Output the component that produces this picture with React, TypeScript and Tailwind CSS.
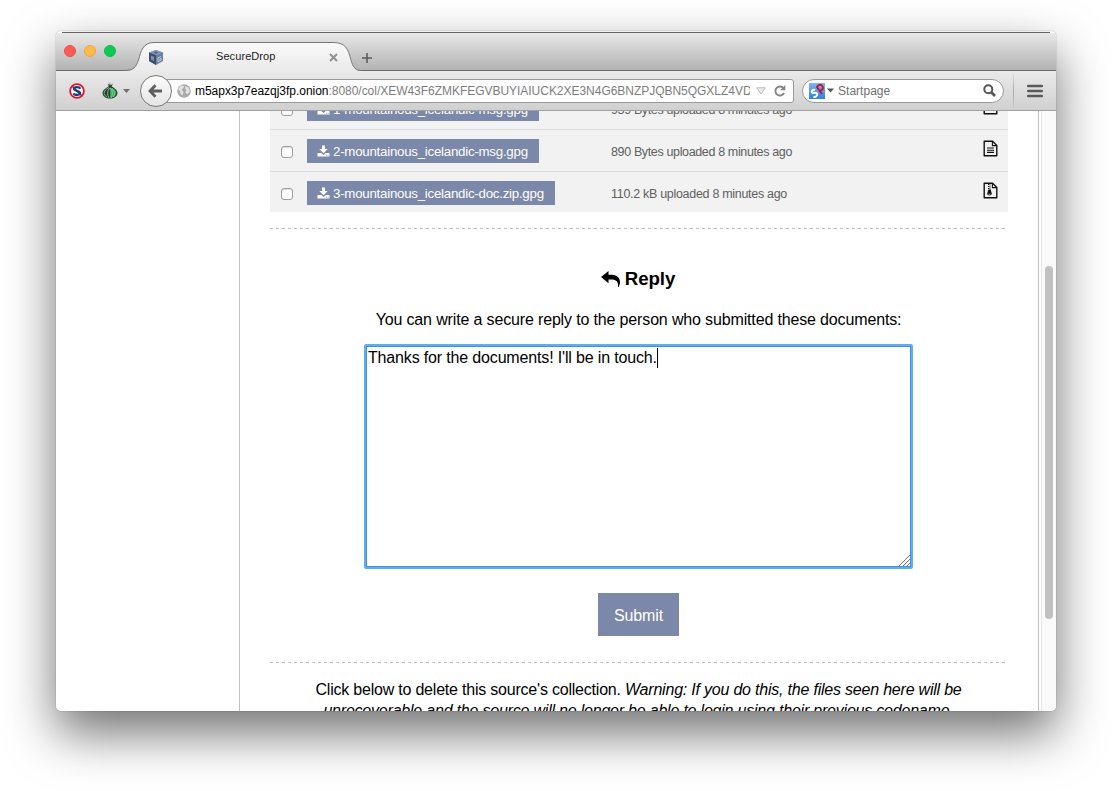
import React from "react";

const chromeFont = "font-['Liberation_Sans',Arial,sans-serif]";

function TextFileIcon() {
  return (
    <svg width="15" height="17" viewBox="0 0 15 17" fill="none" stroke="#111" className="block">
      <path d="M1.2 1.2H9.6L13.8 5.4V15.8H1.2Z" strokeWidth="1.4" strokeLinejoin="round" />
      <path d="M9.4 1.4V5.6H13.6" strokeWidth="1.1" />
      <path d="M4 8H11M4 10.2H11M4 12.4H11" strokeWidth="1.1" />
    </svg>
  );
}

function ZipFileIcon() {
  return (
    <svg width="15" height="17" viewBox="0 0 15 17" fill="none" stroke="#111" className="block">
      <path d="M1.2 1.2H9.6L13.8 5.4V15.8H1.2Z" strokeWidth="1.4" strokeLinejoin="round" />
      <path d="M9.4 1.4V5.6H13.6" strokeWidth="1.1" />
      <path d="M5.6 2V8M7 2.6V8" strokeWidth="1.1" strokeDasharray="1 1" />
      <path d="M5.4 7.6H7.6L8.8 11.6Q8.8 13.6 6.5 13.6T4.2 11.6Z" fill="#111" stroke="none" />
      <path d="M5.6 12.2H7.4" stroke="#eee" strokeWidth="0.8" />
    </svg>
  );
}

function DownloadIcon() {
  return (
    <svg width="13" height="12" viewBox="0 0 13 12" fill="#fff" className="block">
      <path d="M5 0.500H8V4H10.700L6.500 8.200L2.300 4H5Z" />
      <path d="M0.500 8H4.200L6.500 10L8.800 8H12.500V11.500H0.500Z" />
      <path d="M9 10.300H9.900M10.700 10.300H11.600" stroke="#7b88a9" strokeWidth="0.8" />
    </svg>
  );
}

type Doc = { name: string; info: string; zip?: boolean; button: string; meta: string };

const docs: Doc[] = [
  { name: "1-mountainous_icelandic-msg.gpg", info: "939 Bytes uploaded 8 minutes ago", button: "w-[232px]", meta: "tracking-[-0.36px]" },
  { name: "2-mountainous_icelandic-msg.gpg", info: "890 Bytes uploaded 8 minutes ago", button: "w-[232px]", meta: "tracking-[-0.36px]" },
  { name: "3-mountainous_icelandic-doc.zip.gpg", info: "110.2 kB uploaded 8 minutes ago", zip: true, button: "w-[248px]", meta: "tracking-[-0.3px]" },
];

function DocRow({ doc, last }: { doc: Doc; last: boolean }) {
  return (
    <div className={last ? "flex h-[40px] bg-[#f2f2f2]" : "flex h-[42px] border-b border-[#dcdcdc] bg-[#f2f2f2]"}>
      <div className="w-[37px] pl-[11px] pt-[16px]">
        <span className="block h-[12px] w-[12px] rounded-[3px] border border-[#9d9d9d] bg-white shadow-[inset_0_1px_1px_#ddd]" />
      </div>
      <div className="w-[304px] pt-[9px]">
        <div className={`${doc.button} flex h-[24px] items-center bg-[#7b88a9] pl-[10px] text-[13.3px] text-white`}>
          <DownloadIcon />
          <span className="ml-[3px] whitespace-nowrap pt-px tracking-[-0.25px]">{doc.name}</span>
        </div>
      </div>
      <div className={`${doc.meta} flex-1 whitespace-nowrap pt-[13px] text-[12.5px] leading-[18px] text-[#606060]`}>{doc.info}</div>
      <div className="w-[25px] pt-[10px]">{doc.zip ? <ZipFileIcon /> : <TextFileIcon />}</div>
    </div>
  );
}

function Dashes() {
  return <div className="h-px bg-[repeating-linear-gradient(90deg,#bfbfbf_0,#bfbfbf_3px,transparent_3px,transparent_6px)]" />;
}

function TabBar() {
  return (
    <div className="flex h-[40px] flex-col">
      <div className="h-px bg-[#f0f0f0]" />
      <div className="mx-[6px] h-px bg-[#666]" />
      <div className="flex h-[38px] border-b border-[#6b6b6b] bg-linear-to-b from-[#e8e8e8] to-[#b3b3b3]">
        <div className="flex w-[68px] gap-[8px] pl-[8px] pt-[12px]">
          <span className="h-[12px] w-[12px] shrink-0 rounded-full border border-[#e8504c] bg-[#fc5b57]" />
          <span className="h-[12px] w-[12px] shrink-0 rounded-full border border-[#eca83c] bg-[#fdbb4b]" />
          <span className="h-[12px] w-[12px] shrink-0 rounded-full border border-[#0dbb4a] bg-[#0bca52]" />
        </div>
        <div className="relative flex h-[38px] w-[238px]">
          <svg width="238" height="38" viewBox="0 0 238 38" className="absolute left-0 top-0">
            <defs>
              <linearGradient id="tab" x1="0" y1="0" x2="0" y2="1">
                <stop offset="0" stopColor="#fafafa" />
                <stop offset="1" stopColor="#eaeaea" />
              </linearGradient>
            </defs>
            <path d="M0 38C10 38 12 34 14.500 27C17 18 19 9.500 30 9.500H209C222 9.500 224 16 227 27C229 34 231 38 238 38Z" fill="url(#tab)" />
            <path d="M0 37.500C10 37.500 12 34 14.500 27C17 18 19 9.500 30 9.500H209C222 9.500 224 16 227 27C229 34 231 37.500 238 37.500" fill="none" stroke="#777" />
          </svg>
          <div className="relative flex w-full pl-[25px] pt-[16px]">
            <svg width="14" height="15" viewBox="0 0 14 15" className="mt-px block">
              <path d="M7 0L14 2.500V11L7 15L0 11V2.500Z" fill="#6a7fa1" />
              <path d="M0 2.500L7 0L14 2.500L7 5.300Z" fill="#8299b9" />
              <path d="M0 2.500L7 5.300V15L0 11Z" fill="#3c4f6c" />
              <path d="M2 5.500L5 6.700V11L2 9.500Z" fill="#7f91af" />
              <path d="M12 6.500L9 7.800V11.800L12 10V8.500L10.500 9.300" fill="none" stroke="#c5cfde" />
              <path d="M4.500 2.500L7 1.600L9.500 2.600L7 3.700Z" fill="#4f6282" />
            </svg>
            <span className="ml-[53px] w-[113px] whitespace-nowrap text-[11px] leading-[15px] tracking-[0.08px] text-[#222]">SecureDrop</span>
            <svg width="9" height="9" viewBox="0 0 9 9" className="mt-[4px]">
              <path d="M1 1L8 8M8 1L1 8" stroke="#929292" strokeWidth="2" />
            </svg>
          </div>
        </div>
        <svg width="10" height="10" viewBox="0 0 10 10" className="mt-[20px] block">
          <path d="M5 0V10M0 5H10" stroke="#5c5c5c" strokeWidth="1.600" />
        </svg>
      </div>
    </div>
  );
}

function Toolbar() {
  return (
    <div className="flex h-[40px] items-center border-b border-[#a0a0a0] bg-linear-to-b from-[#eaeaea] to-[#d0d0d0]">
      <svg width="16" height="16" viewBox="0 0 16 16" className="ml-[13px] block shrink-0">
        <circle cx="8" cy="8" r="6.900" fill="#fff" stroke="#d9192b" strokeWidth="1.800" />
        <path d="M3 3L13 13" stroke="#d9192b" strokeWidth="1.600" />
        <path d="M11.300 5.700C10.500 3.700 5.200 3.500 5 5.800C4.900 8.300 11.200 7.500 11.100 10.200C10.800 12.600 5.300 12.300 4.600 10.300" fill="none" stroke="#1b3d88" strokeWidth="2.300" />
      </svg>
      <svg width="16" height="17" viewBox="0 0 16 17" className="ml-[17px] block shrink-0">
        <path d="M8 0L8.500 3.500L11 1.500L9.600 4.500C12.500 6 15.500 8 15.500 11C15.500 14.500 12 16.500 8 16.500S0.500 14.500 0.500 11C0.500 8 4 6 6.600 4.500L6 1.500L7.500 3Z" fill="#25422b" />
        <path d="M8 5.500C13 7 14.200 9 14.200 11C14.200 13.500 11.500 15.500 8 15.500Z" fill="#35a95a" />
        <path d="M7 5.500C4 7 2 9 2 11.500Q3 14 5 15M7.500 6Q4 11 7 16M8.500 6Q12 11 9 16M10 6Q14 11 11.500 15" fill="none" stroke="#9dceaa" strokeWidth="0.800" />
      </svg>
      <svg width="7" height="4" viewBox="0 0 7 4" className="ml-[5px] block shrink-0"><path d="M0 0H7L3.500 4Z" fill="#707070" /></svg>
      <div className="ml-[10px] flex h-[32px] w-[654px] items-center">
        <span className="z-10 flex h-[32px] w-[32px] shrink-0 items-center justify-center rounded-full border border-[#777] bg-linear-to-b from-[#fcfcfc] to-[#e5e5e5]">
          <svg width="14" height="14" viewBox="0 0 14 14" className="block -translate-x-px"><path d="M14 7H2.500M7.500 1.300L2 7L7.500 12.700" fill="none" stroke="#5f5f5f" strokeWidth="2.800" /></svg>
        </span>
        <div className="-ml-[6px] flex h-[24px] flex-1 items-center rounded-r-[3px] border border-[#999] bg-white pl-[10px]">
          <svg width="14" height="14" viewBox="0 0 14 14" className="block shrink-0">
            <circle cx="7" cy="7" r="6.800" fill="#aaa" />
            <path d="M1 5L4 1.500L7 2L6.500 4L4.500 5.500L6.500 8L5.500 11.500L3.500 9.500L3 7ZM8.500 2L11.500 3.500L13 7L10.500 10.500L8.500 8.500L9.500 6L8 4.500Z" fill="#e3e3e3" />
          </svg>
          <div className="ml-[4px] w-[555px] overflow-hidden whitespace-nowrap text-[12px] leading-[18px] text-[#7d7d7d]">
            <span className="tracking-[-0.03px] text-black">m5apx3p7eazqj3fp.onion</span>
            <span className="tracking-[-0.03px]">:8080/col/XEW43F6ZMKFEGVBUYIAIUCK2XE3N4G6BNZPJQBN5QGXLZ4VD</span>
          </div>
          <svg width="10" height="8" viewBox="0 0 10 8" className="ml-[6px] block shrink-0"><path d="M0.800 0.800H9.200L5 7Z" fill="#eee" stroke="#bbb" /></svg>
          <svg width="12" height="12" viewBox="0 0 12 12" className="ml-[8px] block shrink-0">
            <path d="M9.500 3.300A4.500 4.500 0 1 0 10 8" fill="none" stroke="#858585" strokeWidth="1.900" />
            <path d="M11.300 0V5.300H6Z" fill="#858585" />
          </svg>
        </div>
      </div>
      <div className="ml-[8px] flex h-[24px] w-[202px] items-center rounded-full border border-[#999] bg-white pl-[6px] pr-[7px]">
        <svg width="16" height="16" viewBox="0 0 16 16" className="block">
          <defs><linearGradient id="sp" x1="0" y1="0" x2="0" y2="1"><stop offset="0" stopColor="#7fb6f2" /><stop offset="1" stopColor="#2f80e0" /></linearGradient></defs>
          <rect width="16" height="16" fill="url(#sp)" />
          <path d="M6 7.200C4 6.200 1.800 8 3 9.500C4.500 11 6.800 8.700 8 10.600C9 12.600 6.500 14.500 4.500 13.800" fill="none" stroke="#fff" strokeWidth="2" />
          <path d="M7.500 3.500L13 11M8.500 5C7.500 2 11.500 0.800 13.300 3C15.200 5.500 12.500 8.300 10.500 7.300" fill="none" stroke="#c41230" strokeWidth="1.900" />
        </svg>
        <svg width="7" height="5" viewBox="0 0 7 5" className="ml-[2px] block"><path d="M0 0.500H7L3.500 4.500Z" fill="#555" /></svg>
        <span className="ml-[4px] flex-1 text-[12px] leading-[18px] tracking-[0.02px] text-[#707070]">Startpage</span>
        <svg width="13" height="13" viewBox="0 0 13 13"><circle cx="5.300" cy="5.300" r="4" fill="none" stroke="#555" strokeWidth="2" /><path d="M8 8L12 12" stroke="#555" strokeWidth="2.600" /></svg>
      </div>
      <div className="ml-[9px] h-[34px] w-px bg-linear-to-b from-[#dcdcdc] via-[#a5abb0] to-[#c8c8c8]" />
      <svg width="16" height="14" viewBox="0 0 16 14" className="ml-[13px] block">
        <path d="M1.200 2H14.800M1.200 7H14.800M1.200 12H14.800" stroke="#5a5a5a" strokeWidth="2.600" strokeLinecap="round" />
      </svg>
    </div>
  );
}

export default function App() {
  return (
    <div className={`${chromeFont} h-[791px] w-[1112px] overflow-hidden bg-white pl-[56px] pt-[31px] text-black`}>
      <div className="h-[680px] w-[1000px] rounded-[5px] shadow-[0_0_1px_rgba(0,0,0,0.6),0_22px_50px_rgba(0,0,0,0.56)]">
        <div className="flex h-full flex-col overflow-hidden rounded-[5px] bg-white">
          <TabBar />
          <Toolbar />
          <div className="flex h-[600px] overflow-hidden">
            <div className="w-[183px] shrink-0" />
            <main className="h-[600px] w-[800px] shrink-0 overflow-hidden border-x border-[#bfbfbf] pl-[30px] pr-[30px]">
              <div className="-mt-[23px]">
                {docs.map((d, i) => <DocRow key={d.name} doc={d} last={i === docs.length - 1} />)}
              </div>
              <div className="mt-[16px]"><Dashes /></div>
              <section className="pr-px">
                <h2 className="mt-[37px] flex h-[26px] items-center justify-center pr-px text-[18.7px] font-bold tracking-[-0.1px]">
                  <svg width="19" height="16" viewBox="0 0 19 16" className="mr-[5px] block">
                    <path d="M7.500 0V3.700H10C15.500 3.700 19 6.400 19 11C19 13 18.200 14.700 17.600 16H17C17.500 11 15.500 8.600 10 8.600H7.500V12.200L0 6.100Z" />
                  </svg>
                  <span>Reply</span>
                </h2>
                <p className="mt-[17px] whitespace-nowrap text-center text-[16px] leading-[22px] tracking-[-0.15px]">You can write a secure reply to the person who submitted these documents:</p>
                <div className="mx-auto mt-[13px] flex h-[225px] w-[549px] rounded-[2px] border-2 border-[#5fadf6]">
                  <div className="relative flex flex-1 border border-[#438fdf] pl-px pt-px">
                    <span className="whitespace-nowrap text-[16px] leading-[20px] tracking-[-0.16px]">Thanks for the documents! I'll be in touch.</span>
                    <span className="h-[20px] w-px bg-black" />
                    <svg width="11" height="11" viewBox="0 0 11 11" className="absolute bottom-0 right-0">
                      <path d="M0 11L11 0M4 11L11 4M8 11L11 8" stroke="#777" />
                    </svg>
                  </div>
                </div>
                <button className="mx-auto mt-[24px] block h-[43px] w-[81px] bg-[#7b88a9] pt-[2px] text-[16px] tracking-[-0.15px] text-white">Submit</button>
              </section>
              <div className="mt-[26px]"><Dashes /></div>
              <p className="mt-[16px] whitespace-nowrap pr-px text-center text-[16px] leading-[21px] tracking-[-0.21px]">
                <span>Click below to delete this source's collection. </span>
                <i>Warning: If you do this, the files seen here will be</i><br />
                <i>unrecoverable and the source will no longer be able to login using their previous codename.</i>
              </p>
            </main>
            <div className="ml-[2px] w-[15px] border-l border-[#e5e5e5] bg-[#fafafa] pl-[3px] pt-[155px]">
              <div className="h-[353px] w-[8px] rounded-full bg-[#c1c1c1]" />
            </div>
          </div>
        </div>
      </div>
    </div>
  );
}
